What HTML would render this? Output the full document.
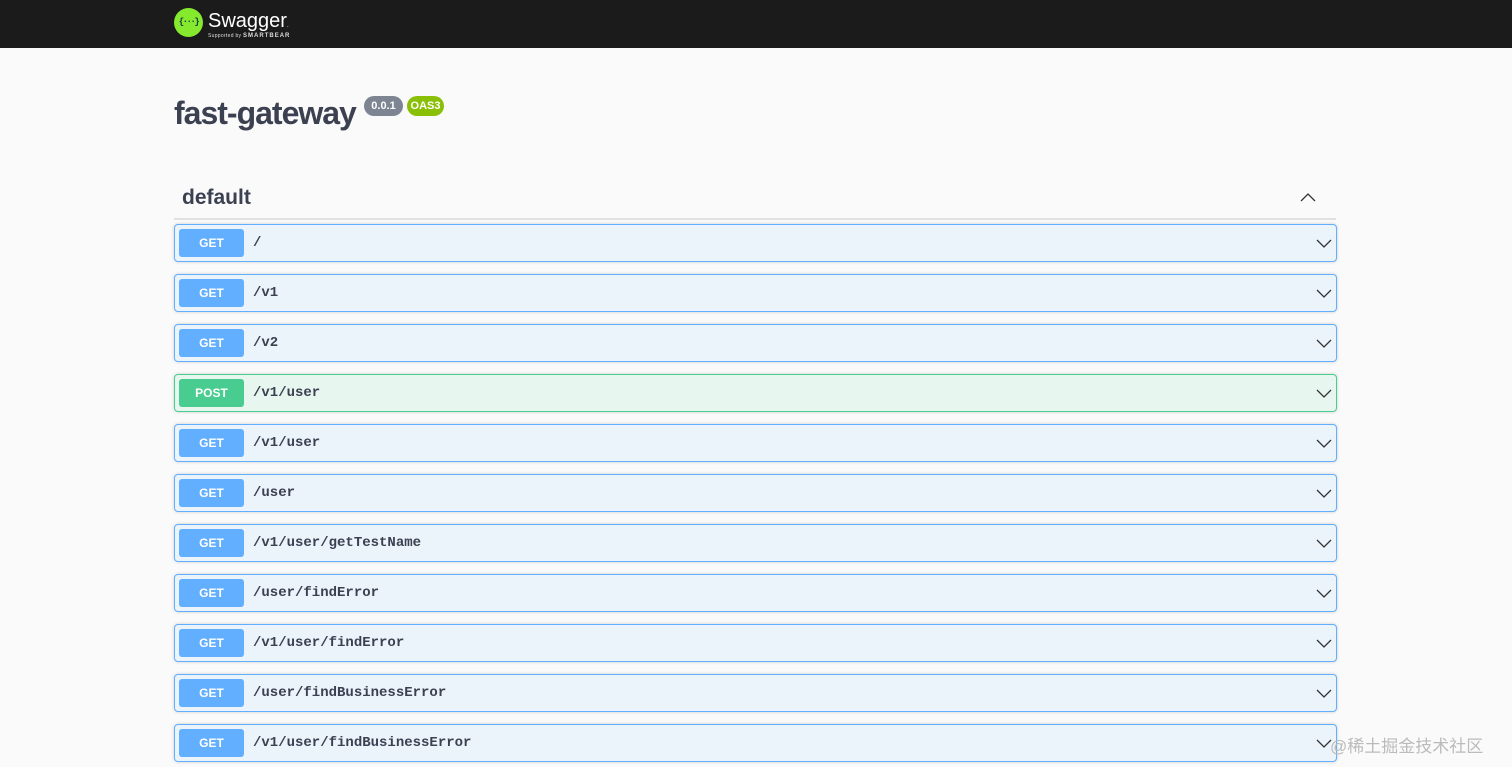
<!DOCTYPE html>
<html><head><meta charset="utf-8"><style>
*{box-sizing:border-box;margin:0;padding:0}
body{width:1512px;height:767px;overflow:hidden;background:#fafafa;font-family:"Liberation Sans","DejaVu Sans",sans-serif;position:relative}
.top{height:48px;background:#1b1b1b;position:relative}
.logo{position:absolute;left:174px;top:8px;width:29px;height:29px;border-radius:50%;background:#85ea2d;color:#173647;font:bold 9px "Liberation Mono",monospace;text-align:center;line-height:28px;letter-spacing:-1.5px;overflow:hidden}
.sw{position:absolute;left:208px;top:10px;color:#fff;font-size:20px}
.sb{position:absolute;left:208px;top:33px;color:#ddd;font-size:5px;letter-spacing:.3px}
.sb b{font-size:6px;letter-spacing:1px}
h1{position:absolute;left:174px;top:95px;font-size:32px;color:#3b4151;font-weight:bold;letter-spacing:-1px}
.badge{position:absolute;top:96px;height:20px;border-radius:10px;color:#fff;font-size:11px;font-weight:bold;line-height:20px;text-align:center}
.tag{position:absolute;left:174px;top:176px;width:1162px;height:44px;border-bottom:2px solid #e1e1e3}
.tag span{position:absolute;left:8px;top:10px;font-size:21px;font-weight:bold;color:#3b4151}
.op{position:absolute;left:174px;width:1163px;height:38px;border:1px solid #61affe;background:#ebf3fb;border-radius:4px;box-shadow:0 0 3px rgba(0,0,0,.19)}
.op.post{border-color:#49cc90;background:#e8f6f0}
.m{position:absolute;left:4px;top:4px;width:65px;height:28px;border-radius:3px;background:#61affe;color:#fff;font-size:12px;font-weight:bold;text-align:center;line-height:29px}
.post .m{background:#49cc90}
.p{position:absolute;left:78px;top:10px;font:bold 14px "Liberation Mono","DejaVu Sans Mono",monospace;color:#3b4151}
.op svg{position:absolute;right:4px;top:11px}
.wm{position:absolute;left:1330px;top:732px;font-size:17px;color:#bbb;font-family:"Liberation Sans","Noto Sans CJK SC",sans-serif}
</style></head><body>
<div class="top"><div class="logo">{···}</div><div class="sw">Swagger<span style="font-size:6px">.</span></div><div class="sb">Supported by <b>SMARTBEAR</b></div></div>
<h1>fast-gateway</h1>
<div class="badge" style="left:364px;width:39px;background:#7d8492">0.0.1</div>
<div class="badge" style="left:407px;width:37px;background:#89bf04">OAS3</div>
<div class="tag"><span>default</span><svg style="position:absolute;right:20px;top:16px" width="16" height="12" viewBox="0 0 16 12"><path d="M1 9 L8 2 L15 9" fill="none" stroke="#333" stroke-width="1.3"/></svg></div>

<div class="op" style="top:224px"><div class="m">GET</div><div class="p">/</div><svg width="16" height="14" viewBox="0 0 16 14"><path d="M1 4 L8 11 L15 4" fill="none" stroke="#333" stroke-width="1.3"/></svg></div>
<div class="op" style="top:274px"><div class="m">GET</div><div class="p">/v1</div><svg width="16" height="14" viewBox="0 0 16 14"><path d="M1 4 L8 11 L15 4" fill="none" stroke="#333" stroke-width="1.3"/></svg></div>
<div class="op" style="top:324px"><div class="m">GET</div><div class="p">/v2</div><svg width="16" height="14" viewBox="0 0 16 14"><path d="M1 4 L8 11 L15 4" fill="none" stroke="#333" stroke-width="1.3"/></svg></div>
<div class="op post" style="top:374px"><div class="m">POST</div><div class="p">/v1/user</div><svg width="16" height="14" viewBox="0 0 16 14"><path d="M1 4 L8 11 L15 4" fill="none" stroke="#333" stroke-width="1.3"/></svg></div>
<div class="op" style="top:424px"><div class="m">GET</div><div class="p">/v1/user</div><svg width="16" height="14" viewBox="0 0 16 14"><path d="M1 4 L8 11 L15 4" fill="none" stroke="#333" stroke-width="1.3"/></svg></div>
<div class="op" style="top:474px"><div class="m">GET</div><div class="p">/user</div><svg width="16" height="14" viewBox="0 0 16 14"><path d="M1 4 L8 11 L15 4" fill="none" stroke="#333" stroke-width="1.3"/></svg></div>
<div class="op" style="top:524px"><div class="m">GET</div><div class="p">/v1/user/getTestName</div><svg width="16" height="14" viewBox="0 0 16 14"><path d="M1 4 L8 11 L15 4" fill="none" stroke="#333" stroke-width="1.3"/></svg></div>
<div class="op" style="top:574px"><div class="m">GET</div><div class="p">/user/findError</div><svg width="16" height="14" viewBox="0 0 16 14"><path d="M1 4 L8 11 L15 4" fill="none" stroke="#333" stroke-width="1.3"/></svg></div>
<div class="op" style="top:624px"><div class="m">GET</div><div class="p">/v1/user/findError</div><svg width="16" height="14" viewBox="0 0 16 14"><path d="M1 4 L8 11 L15 4" fill="none" stroke="#333" stroke-width="1.3"/></svg></div>
<div class="op" style="top:674px"><div class="m">GET</div><div class="p">/user/findBusinessError</div><svg width="16" height="14" viewBox="0 0 16 14"><path d="M1 4 L8 11 L15 4" fill="none" stroke="#333" stroke-width="1.3"/></svg></div>
<div class="op" style="top:724px"><div class="m">GET</div><div class="p">/v1/user/findBusinessError</div><svg width="16" height="14" viewBox="0 0 16 14"><path d="M1 4 L8 11 L15 4" fill="none" stroke="#333" stroke-width="1.3"/></svg></div>
<div class="wm">@稀土掘金技术社区</div>
</body></html>
